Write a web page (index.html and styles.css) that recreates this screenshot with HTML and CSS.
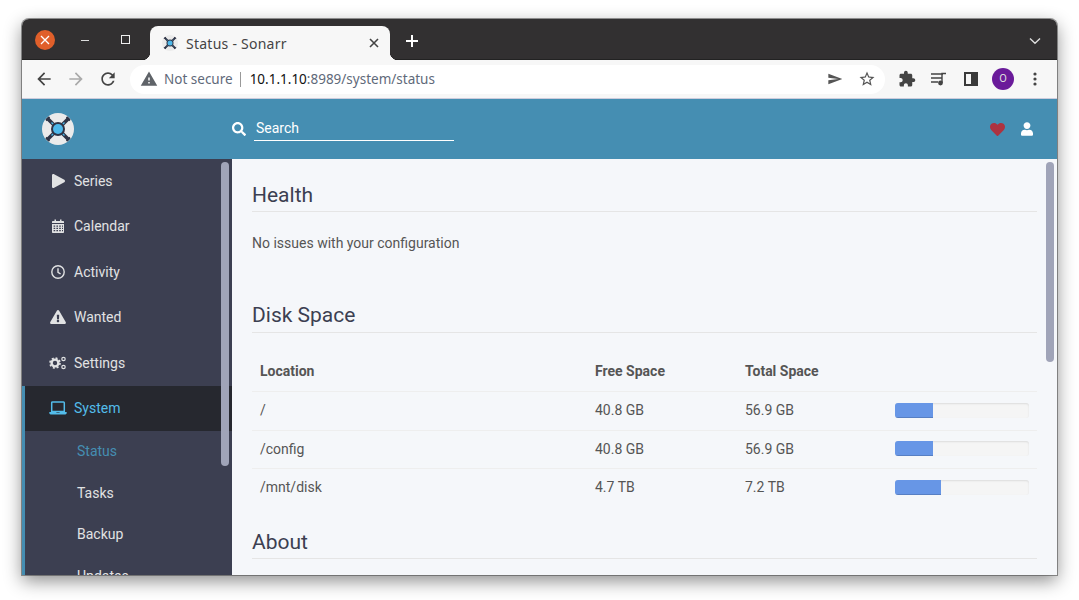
FILE: index.html
```html
<!DOCTYPE html>
<html lang="en">
<head>
    <meta charset="UTF-8">
    <meta content="width=device-width, initial-scale=1.0" name="viewport">
    <title>Status - Sonarr</title>
    <link rel="stylesheet" href="styles.css">
</head>
<body>

<svg class="defs" width="0" height="0">
    <symbol id="logo" viewBox="0 0 32 32">
        <circle cx="16" cy="16" r="16" fill="#ebebeb"/>
        <path d="M5 5L27 27M27 5L5 27" stroke="#2f3446" stroke-width="3.6"/>
        <path d="M4 7.5L7.5 4M24.5 4L28 7.5M4 24.5L7.5 28M24.5 28L28 24.5" stroke="#2f3446" stroke-width="1.8"/>
        <path d="M9.5 9.5L22.5 22.5M22.5 9.5L9.5 22.5" stroke="#4db8ea" stroke-width="1.3"/>
        <circle cx="16" cy="16" r="7" fill="#2f3446"/>
        <circle cx="16" cy="16" r="5" fill="#4db8ea"/>
    </symbol>
</svg>

<div class="window">
    <!-- Browser tabs -->
    <div class="tabstrip">
        <div class="win-controls">
            <span class="win-close">
                <svg width="10" height="10" viewBox="0 0 10 10"><path d="M1 1L9 9M9 1L1 9" stroke="#fff" stroke-width="1.3"/></svg>
            </span>
            <span class="win-btn"><i class="win-min"></i></span>
            <span class="win-btn"><i class="win-max"></i></span>
        </div>
        <div class="tab">
            <svg class="tab-icon" width="16" height="16"><use href="#logo"/></svg>
            <span class="tab-title">Status - Sonarr</span>
            <svg class="tab-close" width="10" height="10" viewBox="0 0 10 10"><path d="M1 1L9 9M9 1L1 9" stroke="#444" stroke-width="1.6"/></svg>
        </div>
        <svg class="new-tab" width="14" height="14" viewBox="0 0 14 14"><path d="M7 1V13M1 7H13" stroke="#fff" stroke-width="2"/></svg>
        <svg class="tab-menu" width="12" height="8" viewBox="0 0 12 8"><path d="M1 1.5L6 6.2L11 1.5" fill="none" stroke="#ddd" stroke-width="1.4"/></svg>
    </div>

    <!-- Browser toolbar -->
    <div class="toolbar">
        <svg class="tool" width="20" height="20" viewBox="0 0 24 24"><path fill="#444" d="M20 11H7.83l5.59-5.59L12 4l-8 8 8 8 1.41-1.41L7.83 13H20v-2z"/></svg>
        <svg class="tool" width="20" height="20" viewBox="0 0 24 24"><path fill="#aaa" d="M12 4l-1.41 1.41L16.17 11H4v2h12.17l-5.58 5.59L12 20l8-8z"/></svg>
        <svg class="tool" width="20" height="20" viewBox="0 0 24 24"><path fill="#444" d="M17.65 6.35C16.2 4.9 14.21 4 12 4c-4.42 0-7.99 3.58-7.99 8s3.57 8 7.99 8c3.73 0 6.84-2.55 7.73-6h-2.08c-.82 2.33-3.04 4-5.65 4-3.31 0-6-2.69-6-6s2.69-6 6-6c1.66 0 3.14.69 4.22 1.78L13 11h7V4l-2.35 2.35z"/></svg>
        <div class="omnibox">
            <svg class="warn" width="18" height="18" viewBox="0 0 24 24"><path fill="#5f6368" d="M1 21h22L12 2 1 21zm12-3h-2v-2h2v2zm0-4h-2v-4h2v4z"/></svg>
            <span class="not-secure">Not secure</span>
            <span class="omni-sep"></span>
            <span class="url"><b>10.1.1.10</b>:8989/system/status</span>
            <svg class="omni-send" width="16" height="16" viewBox="0 0 24 24"><path fill="#555" d="M2.01 20L23 12 2.01 4 2 10l15 2-15 2z"/></svg>
            <svg class="omni-star" width="18" height="18" viewBox="0 0 24 24"><path fill="#555" d="M22 9.24l-7.19-.62L12 2 9.19 8.63 2 9.24l5.46 4.73L5.82 21 12 17.27 18.18 21l-1.63-7.03L22 9.24zM12 15.4l-3.76 2.27 1-4.28-3.32-2.88 4.38-.38L12 6.1l1.71 4.04 4.38.38-3.32 2.88 1 4.28L12 15.4z"/></svg>
        </div>
        <div class="tool-right">
            <svg width="18" height="18" viewBox="0 0 24 24"><path fill="#444" d="M20.5 11H19V7c0-1.1-.9-2-2-2h-4V3.5C13 2.12 11.88 1 10.5 1S8 2.12 8 3.5V5H4c-1.1 0-1.99.9-1.99 2v3.8H3.5c1.49 0 2.7 1.21 2.7 2.7s-1.21 2.7-2.7 2.7H2V20c0 1.1.9 2 2 2h3.8v-1.5c0-1.49 1.21-2.7 2.7-2.7 1.49 0 2.7 1.21 2.7 2.7V22H17c1.1 0 2-.9 2-2v-4h1.5c1.38 0 2.5-1.12 2.5-2.5S21.88 11 20.5 11z"/></svg>
            <svg width="16" height="14" viewBox="0 0 16 14"><path d="M0 2H12M0 6H11M0 10H7" stroke="#444" stroke-width="1.3"/><path d="M11 11V1.5H15" fill="none" stroke="#444" stroke-width="1.4"/><circle cx="9.5" cy="11" r="2.4" fill="#444"/></svg>
            <span class="side-panel"><i></i></span>
            <span class="avatar">O</span>
            <svg width="4" height="14" viewBox="0 0 4 14"><circle cx="2" cy="2" r="1.6" fill="#444"/><circle cx="2" cy="7" r="1.6" fill="#444"/><circle cx="2" cy="12" r="1.6" fill="#444"/></svg>
        </div>
    </div>

    <!-- Sonarr header -->
    <header class="app-header">
        <div class="logo-cell">
            <svg width="32" height="32"><use href="#logo"/></svg>
        </div>
        <div class="search">
            <svg width="14" height="14" viewBox="0 0 512 512"><path fill="#fff" d="M505 442.7L405.3 343c-4.5-4.5-10.6-7-17-7H372c27.6-35.3 44-79.7 44-128C416 93.1 322.9 0 208 0S0 93.1 0 208s93.1 208 208 208c48.3 0 92.7-16.4 128-44v16.3c0 6.4 2.5 12.5 7 17l99.7 99.7c9.4 9.4 24.6 9.4 33.9 0l28.3-28.3c9.4-9.4 9.4-24.6.1-34zM208 336c-70.7 0-128-57.2-128-128 0-70.7 57.2-128 128-128 70.7 0 128 57.2 128 128 0 70.7-57.2 128-128 128z"/></svg>
            <span class="search-box">Search</span>
        </div>
        <div class="header-actions">
            <svg width="15" height="15" viewBox="0 0 512 512"><path fill="#ad3340" d="M462.3 62.6C407.5 15.9 326 24.3 275.7 76.2L256 96.5l-19.7-20.3C186.1 24.3 104.5 15.9 49.7 62.6c-62.8 53.6-66.1 149.8-9.9 207.9l193.5 199.8c12.5 12.9 32.8 12.9 45.3 0l193.5-199.8c56.3-58.1 53-154.3-9.8-207.9z"/></svg>
            <svg width="12" height="14" viewBox="0 0 448 512"><path fill="#fff" d="M224 256c70.7 0 128-57.3 128-128S294.7 0 224 0 96 57.3 96 128s57.3 128 128 128zm89.6 32h-16.7c-22.2 10.2-46.9 16-72.9 16s-50.6-5.8-72.9-16h-16.7C60.2 288 0 348.2 0 422.4V464c0 26.5 21.5 48 48 48h352c26.5 0 48-21.5 48-48v-41.6c0-74.2-60.2-134.4-134.4-134.4z"/></svg>
        </div>
    </header>

    <div class="app-body">
        <!-- Sidebar -->
        <nav class="sidebar">
            <a class="nav-item">
                <span class="nav-icon"><svg width="13" height="14" viewBox="0 0 448 512" preserveAspectRatio="none"><path fill="#e1e2e3" d="M424.4 214.7L72.4 6.6C43.8-10.3 0 6.1 0 47.9V464c0 37.5 40.7 60.1 72.4 41.3l352-208c31.4-18.5 31.5-64.1 0-82.6z"/></svg></span>
                Series
            </a>
            <a class="nav-item">
                <span class="nav-icon"><svg width="12" height="14" viewBox="0 0 12 14"><path fill="#e1e2e3" d="M0 5H12V13C12 13.6 11.6 14 11 14H1C.4 14 0 13.6 0 13ZM1 2H2.5V.5H4V2H8V.5H9.5V2H11C11.6 2 12 2.4 12 3V4H0V3C0 2.4.4 2 1 2Z"/><path stroke="#3c3f51" stroke-width="1.2" stroke-dasharray="1.6 1.2" d="M1.6 7.2H11M1.6 9.4H11M1.6 11.6H11"/></svg></span>
                Calendar
            </a>
            <a class="nav-item">
                <span class="nav-icon"><svg width="14" height="14" viewBox="0 0 14 14"><circle cx="7" cy="7" r="6.2" fill="none" stroke="#e1e2e3" stroke-width="1.4"/><path d="M7 3.2V7.3L9.6 9" fill="none" stroke="#e1e2e3" stroke-width="1.4"/></svg></span>
                Activity
            </a>
            <a class="nav-item">
                <span class="nav-icon"><svg width="16" height="14" viewBox="0 0 576 512"><path fill="#e1e2e3" d="M569.517 440.013C587.975 472.007 564.806 512 527.94 512H48.054c-36.937 0-59.999-40.055-41.577-71.987L246.423 23.985c18.467-32.009 64.72-31.951 83.154 0l239.94 416.028zM288 354c-25.405 0-46 20.595-46 46s20.595 46 46 46 46-20.595 46-46-20.595-46-46-46zm-43.673-165.346l7.418 136c.347 6.364 5.609 11.346 11.982 11.346h48.546c6.373 0 11.635-4.982 11.982-11.346l7.418-136c.375-6.874-5.098-12.654-11.982-12.654h-63.383c-6.884 0-12.356 5.78-11.981 12.654z"/></svg></span>
                Wanted
            </a>
            <a class="nav-item">
                <span class="nav-icon"><svg width="18" height="14" viewBox="0 0 18 14"><circle cx="6" cy="7" r="3.4" fill="none" stroke="#e1e2e3" stroke-width="2.4"/><circle cx="6" cy="7" r="5" fill="none" stroke="#e1e2e3" stroke-width="1.6" stroke-dasharray="2 1.93"/><circle cx="14.5" cy="3" r="1.7" fill="none" stroke="#e1e2e3" stroke-width="1.2"/><circle cx="14.5" cy="11" r="1.7" fill="none" stroke="#e1e2e3" stroke-width="1.2"/></svg></span>
                Settings
            </a>
            <div class="nav-group">
                <a class="nav-item nav-item-active">
                    <span class="nav-icon"><svg width="18" height="14" viewBox="0 0 18 14"><path d="M2.7 1.7C2.7 1.2 3 .9 3.5.9H14.5C15 .9 15.3 1.2 15.3 1.7V10.5H2.7Z" fill="none" stroke="#53bcea" stroke-width="1.5"/><path fill="#53bcea" d="M.3 11H7.2L7.6 11.8H10.4L10.8 11H17.7V12C17.7 12.8 17 13.4 16.3 13.4H1.7C1 13.4 .3 12.8 .3 12Z"/></svg></span>
                    System
                </a>
                <a class="nav-sub nav-sub-active">Status</a>
                <a class="nav-sub">Tasks</a>
                <a class="nav-sub">Backup</a>
                <a class="nav-sub">Updates</a>
            </div>
            <span class="scroll-thumb side-thumb"></span>
        </nav>

        <!-- Page content -->
        <main class="content">
            <section class="block block-health">
                <h2>Health</h2>
                <p>No issues with your configuration</p>
            </section>
            <section class="block block-disk">
                <h2>Disk Space</h2>
                <table class="disk-table">
                    <thead>
                        <tr><th class="col-loc">Location</th><th class="col-free">Free Space</th><th class="col-total">Total Space</th><th></th></tr>
                    </thead>
                    <tbody>
                        <tr>
                            <td>/</td><td>40.8 GB</td><td>56.9 GB</td>
                            <td><div class="bar"><div class="bar-fill" style="width: 28%"></div></div></td>
                        </tr>
                        <tr>
                            <td>/config</td><td>40.8 GB</td><td>56.9 GB</td>
                            <td><div class="bar"><div class="bar-fill" style="width: 28%"></div></div></td>
                        </tr>
                        <tr>
                            <td>/mnt/disk</td><td>4.7 TB</td><td>7.2 TB</td>
                            <td><div class="bar"><div class="bar-fill" style="width: 34%"></div></div></td>
                        </tr>
                    </tbody>
                </table>
            </section>
            <section class="block">
                <h2>About</h2>
            </section>
            <span class="scroll-thumb main-thumb"></span>
        </main>
    </div>
</div>

</body>
</html>
```

FILE: styles.css
```css
body {
    margin: 0;
    padding: 19px 22px 0;
    height: 600px;
    box-sizing: border-box;
    overflow: hidden;
    background-color: #fff;
    font-family: Roboto, "Liberation Sans", sans-serif;
}
.defs {
    position: absolute;
}
.window {
    height: 556px;
    display: flex;
    flex-direction: column;
    overflow: hidden;
    border-radius: 7px 7px 0 0;
    box-shadow: 0 0 0 1px rgba(70, 70, 70, 0.55), 0 6px 18px rgba(0, 0, 0, 0.45);
}

/* Browser tabs */
.tabstrip {
    height: 41px;
    flex: none;
    display: flex;
    align-items: flex-end;
    background-color: #323031;
    border-bottom: 1px solid #222;
    box-sizing: border-box;
}
.win-controls {
    width: 128px;
    height: 40px;
    padding-left: 13px;
    box-sizing: border-box;
    display: flex;
    align-items: center;
    align-self: flex-start;
}
.win-close {
    width: 20px;
    height: 20px;
    margin-top: 1px;
    border-radius: 50%;
    background-color: #e05f2a;
    display: flex;
    align-items: center;
    justify-content: center;
}
.win-btn {
    width: 40px;
    display: flex;
    justify-content: center;
}
.win-btn:nth-child(2) {
    margin-left: 10px;
}
.win-min {
    width: 8px;
    height: 1px;
    margin-top: 3px;
    background-color: #ddd;
}
.win-max {
    width: 7px;
    height: 7px;
    border: 1px solid #eee;
}
.tab {
    position: relative;
    width: 240px;
    height: 34px;
    margin-bottom: -1px;
    background-color: #f7f7f7;
    border-radius: 8px 8px 0 0;
    display: flex;
    align-items: center;
}
.tab::before,
.tab::after {
    content: "";
    position: absolute;
    bottom: 0;
    width: 8px;
    height: 8px;
}
.tab::before {
    left: -8px;
    background: radial-gradient(circle at 0 0, transparent 8px, #f7f7f7 8.5px);
}
.tab::after {
    right: -8px;
    background: radial-gradient(circle at 100% 0, transparent 8px, #f7f7f7 8.5px);
}
.tab-icon {
    margin-left: 12px;
}
.tab-title {
    margin-left: 8px;
    flex: 1;
    font-family: "Noto Sans", sans-serif;
    font-size: 14px;
    letter-spacing: 0.25px;
    color: #444;
}
.tab-close {
    margin-right: 11px;
}
.new-tab {
    margin: 0 0 11px 15px;
}
.tab-menu {
    margin: 0 16px 14px auto;
}

/* Browser toolbar */
.toolbar {
    height: 39px;
    flex: none;
    display: flex;
    align-items: center;
    padding-left: 12px;
    background-color: #f7f7f7;
    border-bottom: 1px solid #ccd;
    box-sizing: border-box;
}
.tool {
    margin-right: 12px;
}
.omnibox {
    width: 755px;
    height: 29px;
    padding-left: 10px;
    box-sizing: border-box;
    border-radius: 15px;
    background-color: #fff;
    display: flex;
    align-items: center;
    font-family: "Noto Sans", sans-serif;
    font-size: 13.5px;
    color: #5f6a7a;
}
.not-secure {
    margin-left: 6px;
}
.omni-sep {
    width: 1px;
    height: 15px;
    margin: 0 9px 0 7px;
    background-color: #999;
}
.url {
    flex: 1;
}
.url b {
    font-weight: normal;
    color: #111;
}
.omni-send {
    margin-right: 15px;
}
.omni-star {
    margin-right: 9px;
}
.tool-right {
    display: grid;
    grid-template-columns: repeat(5, 32px);
    justify-items: center;
    align-items: center;
    padding-left: 6px;
}
.side-panel {
    width: 14px;
    height: 14px;
    box-sizing: border-box;
    border: 2px solid #3a3a3a;
    display: flex;
    justify-content: flex-end;
}
.side-panel i {
    width: 5px;
    background-color: #3a3a3a;
}
.avatar {
    width: 22px;
    height: 22px;
    border-radius: 50%;
    background-color: #6a1b9a;
    color: #ddd;
    font-size: 11px;
    line-height: 22px;
    text-align: center;
}

/* Sonarr header */
.app-header {
    height: 60px;
    flex: none;
    display: flex;
    align-items: center;
    background-color: #458eb2;
}
.logo-cell {
    width: 210px;
    padding-left: 20px;
    box-sizing: border-box;
    display: flex;
}
.search {
    display: flex;
    align-items: center;
    gap: 8px;
}
.search-box {
    width: 198px;
    height: 24px;
    padding-left: 2px;
    margin-top: -1px;
    line-height: 24px;
    border-bottom: 1px solid #fff;
    color: #fff;
    font-size: 14px;
}
.header-actions {
    margin-left: auto;
    padding-right: 24px;
    display: flex;
    align-items: center;
    gap: 16px;
}

/* Layout below the header */
.app-body {
    flex: 1;
    display: flex;
    min-height: 0;
}
.sidebar {
    position: relative;
    width: 210px;
    flex: none;
    overflow: hidden;
    background-color: #3c3f51;
    color: #e1e2e3;
    font-size: 14px;
}
.nav-item {
    height: 45.5px;
    display: flex;
    align-items: center;
    padding-left: 23px;
}
.nav-item:first-child {
    margin-top: -1px;
}
.nav-icon {
    width: 26px;
    margin-right: 3px;
    display: flex;
    justify-content: center;
}
.nav-group {
    margin-top: 0.5px;
    border-left: 3px solid #458eb2;
}
.nav-group .nav-item:first-child {
    margin-top: 0;
}
.nav-item-active {
    height: 44.8px;
    padding-left: 20px;
    background-color: #26282f;
    color: #53bcea;
}
.nav-sub {
    height: 41.4px;
    display: flex;
    align-items: center;
    padding-left: 52px;
}
.nav-sub-active {
    color: #458eb2;
}
.scroll-thumb {
    position: absolute;
    width: 8px;
    border-radius: 4px;
    background-color: #a0a4b8;
}
.side-thumb {
    top: 3px;
    right: 3px;
    height: 304px;
}
.main-thumb {
    top: 3px;
    right: 3px;
    height: 200px;
}

/* Page content */
.content {
    position: relative;
    flex: 1;
    overflow: hidden;
    padding: 0 20px;
    background-color: #f5f7fa;
    color: #555;
    font-size: 14px;
}
.block h2 {
    margin: 0;
    padding: 1px 0 2px;
    height: 27px;
    line-height: 27px;
    font-size: 21px;
    font-weight: 400;
    color: #3c3f51;
    border-bottom: 1px solid #e5e5e5;
}
.block-health {
    padding-top: 22px;
    height: 121px;
}
.block-health p {
    margin: 21px 0 0;
    line-height: 20px;
}
.block-disk {
    height: 226px;
}
.block-disk h2 {
    padding: 0 0 3px;
}
.disk-table {
    width: 100%;
    margin-top: 19px;
    border-collapse: collapse;
}
.disk-table th {
    height: 37px;
    padding: 0 8px 2px;
    text-align: left;
    font-weight: 700;
}
.disk-table td {
    height: 36.5px;
    padding: 0 8px 1px;
    border-top: 1px solid #eee;
}
.col-loc {
    width: 319px;
}
.col-free,
.col-total {
    width: 134px;
}
.bar {
    width: 134px;
    height: 15px;
    border-radius: 3px;
    overflow: hidden;
    background-color: #f5f5f5;
    box-shadow: inset 0 1px 2px rgba(0, 0, 0, 0.1);
}
.bar-fill {
    height: 100%;
    background-color: #6796e6;
    box-shadow: inset 0 -1px 0 rgba(0, 0, 0, 0.15);
}
```
